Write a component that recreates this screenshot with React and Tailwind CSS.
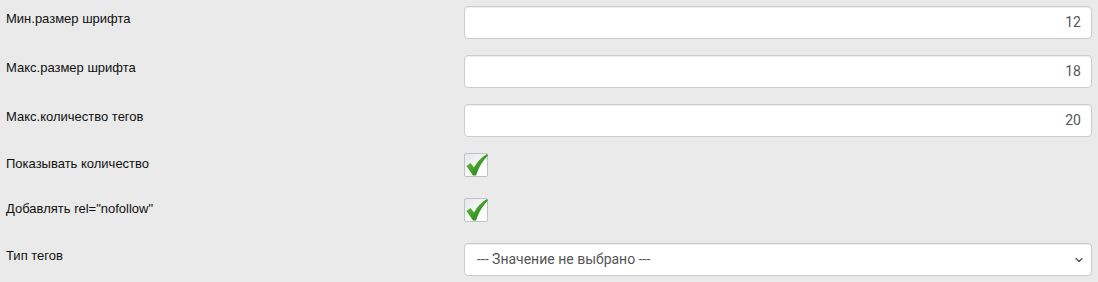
import { ChevronDown } from 'lucide-react'

const rows = [
  { label: 'Мин.размер шрифта', type: 'text', value: '12' },
  { label: 'Макс.размер шрифта', type: 'text', value: '18' },
  { label: 'Макс.количество тегов', type: 'text', value: '20' },
  { label: 'Показывать количество', type: 'check' },
  { label: 'Добавлять rel="nofollow"', type: 'check' },
  { label: 'Тип тегов', type: 'select', value: '--- Значение не выбрано ---' },
]

function Check() {
  return (
    <div className="relative w-6 h-6 rounded-[2px] border border-[#bfc3c8] bg-gradient-to-br from-[#e4e6e8] via-[#f7f7f7] to-white">
      <svg viewBox="0 0 24 24" className="absolute left-[0px] top-[-1px] w-[24px] h-[24px]">
        <defs>
          <linearGradient id="g" x1="0" y1="0" x2="1" y2="1">
            <stop offset="0" stopColor="#66c93f" />
            <stop offset="1" stopColor="#1c7410" />
          </linearGradient>
        </defs>
        <path
          d="M1.5 13 L5.5 10 L9 14.5 C12 9 16 4.5 22 1 L23 2.5 C18 7.5 14 13.5 11 22.5 L8 22.5 Z"
          fill="url(#g)"
        />
      </svg>
    </div>
  )
}

export default function App() {
  return (
    <div className="w-[1098px] h-[282px] bg-[#eaeaea] pt-[6px] pl-[6px] font-['Liberation_Sans',Arial,sans-serif]">
      {rows.map((row, i) => (
        <div key={i} className={`flex ${row.type === 'check' ? 'h-[45px]' : 'h-[49px]'}`}>
          <div className={`w-[458px] text-[13px] text-[#111] leading-4 ${row.type === 'check' ? 'pt-[3px]' : 'pt-[5px]'}`}>
            {row.label}
          </div>
          {row.type === 'text' && (
            <div className="w-[628px] h-[33px] bg-white border border-[#cccccc] rounded-[4px] shadow-[inset_0_1px_1px_rgba(0,0,0,0.075)] flex items-center justify-end pr-[10px] text-[14px] text-[#555] font-['Roboto',sans-serif]">
              {row.value}
            </div>
          )}
          {row.type === 'check' && <Check />}
          {row.type === 'select' && (
            <div className="w-[628px] h-[33px] bg-white border border-[#cccccc] rounded-[4px] shadow-[inset_0_1px_1px_rgba(0,0,0,0.075)] flex items-center justify-between pl-[12px] pr-[6px] text-[14px] text-[#555] font-['Roboto',sans-serif]">
              <span>{row.value}</span>
              <ChevronDown size={12} strokeWidth={2.2} className="text-[#444]" />
            </div>
          )}
        </div>
      ))}
    </div>
  )
}
